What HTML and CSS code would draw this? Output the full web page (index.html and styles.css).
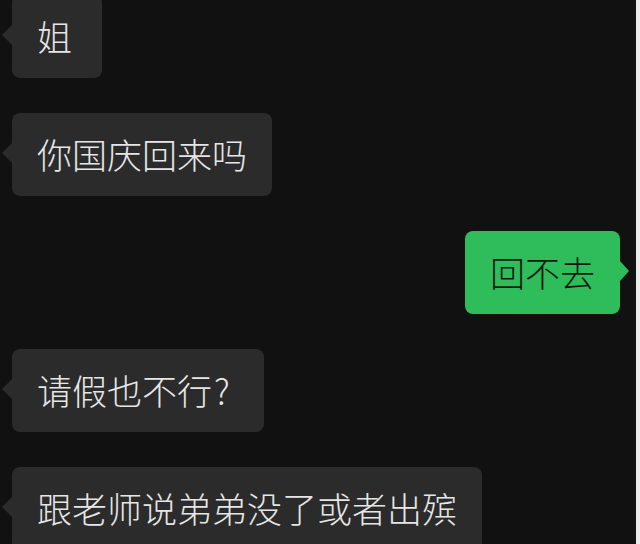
FILE: index.html
```html
<!DOCTYPE html>
<html lang="zh-CN">
<head>
<meta charset="utf-8">
<title>聊天</title>
<link rel="stylesheet" href="styles.css">
</head>
<body>
<div class="screen">
  <div class="chat">
    <div class="row row-in"><div class="bubble in narrow">姐</div></div>
    <div class="row row-in"><div class="bubble in">你国庆回来吗</div></div>
    <div class="row row-out"><div class="bubble out">回不去</div></div>
    <div class="row row-in"><div class="bubble in">请假也不行<span class="q">?</span></div></div>
    <div class="row row-in"><div class="bubble in">跟老师说弟弟没了或者出殡</div></div>
  </div>
</div>
</body>
</html>
```
FILE: styles.css
```css
html, body {
  margin: 0;
  padding: 0;
  background: #111111;
}
.screen {
  width: 640px;
  height: 544px;
  overflow: hidden;
  box-sizing: border-box;
  border-right: 4px solid #ececec;
  background: #111111;
}
.chat {
  display: flex;
  flex-direction: column;
  gap: 35px;
  margin-top: -5px;
  padding: 0 16px 0 12px;
}
.row {
  display: flex;
}
.row-in { justify-content: flex-start; }
.row-out { justify-content: flex-end; }
.bubble {
  position: relative;
  box-sizing: border-box;
  height: 83px;
  padding: 19px 25px 20px;
  border-radius: 8px;
  font-family: "Noto Sans CJK SC", "Noto Sans", sans-serif;
  font-weight: 300;
  font-size: 35px;
  line-height: 44px;
  white-space: nowrap;
}
.bubble::before {
  content: "";
  position: absolute;
  top: 30px;
  width: 0;
  height: 0;
  border-top: 10px solid transparent;
  border-bottom: 10px solid transparent;
}
.in {
  background: #2b2b2b;
  color: #e6e6e6;
}
.in::before {
  left: -10px;
  border-right: 10px solid #2b2b2b;
}
.out {
  background: #2fbc5b;
  color: #0f1a12;
}
.out::before {
  right: -9px;
  border-left: 9px solid #2fbc5b;
}
.narrow {
  min-width: 90px;
}
.q {
  margin-left: 2px;
  margin-right: 9px;
}
```
